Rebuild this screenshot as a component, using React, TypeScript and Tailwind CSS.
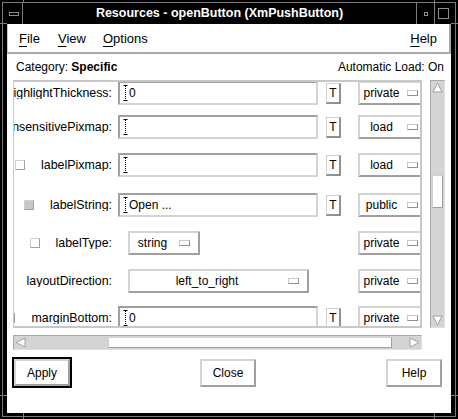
import React from "react";

const raised = "border-2 border-t-[#d4d4d4] border-l-[#d4d4d4] border-r-[#a0a0a0] border-b-[#a0a0a0]";
const sunken = "border-2 border-t-[#a0a0a0] border-l-[#a0a0a0] border-r-[#d4d4d4] border-b-[#d4d4d4]";

type Row = {
  label: string;
  check?: "off" | "on";
  kind: "text" | "option";
  value: string;
  optWidth?: string;
  access: string;
  top: string;
};

const rows: Row[] = [
  { label: "highlightThickness:", kind: "text", value: "0", access: "private", top: "mt-[-1px]" },
  { label: "insensitivePixmap:", kind: "text", value: "", access: "load", top: "mt-[10px]" },
  { label: "labelPixmap:", check: "off", kind: "text", value: "", access: "load", top: "mt-[14px]" },
  { label: "labelString:", check: "on", kind: "text", value: "Open ...", access: "public", top: "mt-[16px]" },
  { label: "labelType:", check: "off", kind: "option", value: "string", optWidth: "w-[72px]", access: "private", top: "mt-[14px]" },
  { label: "layoutDirection:", kind: "option", value: "left_to_right", optWidth: "w-[181px]", access: "private", top: "mt-[14px]" },
  { label: "marginBottom:", check: "off", kind: "text", value: "0", access: "private", top: "mt-[13px]" },
];

function Cursor() {
  return (
    <svg width="5" height="16" viewBox="0 0 5 16" className="shrink-0">
      <path d="M0.5 0.5h4M0.5 15.5h4" stroke="#000" />
      <path d="M2.5 1v14" stroke="#000" strokeDasharray="1 1" />
    </svg>
  );
}

function Indicator() {
  return <span className="block w-[11px] h-[6px] border border-t-[#c8c8c8] border-l-[#c8c8c8] border-r-[#909090] border-b-[#909090] bg-white shrink-0" />;
}

function OptionMenu({ text, width }: { text: string; width: string }) {
  return (
    <div className={`flex items-center h-[24px] bg-white ${raised} ${width} shrink-0`}>
      <span className="flex-1 text-center">{text}</span>
      <span className="mr-[8px] ml-[4px]">
        <Indicator />
      </span>
    </div>
  );
}

function CheckBox({ on }: { on: boolean }) {
  return (
    <span
      className={`block w-[10px] h-[10px] border border-t-[#d0d0d0] border-l-[#d0d0d0] border-r-[#a0a0a0] border-b-[#a0a0a0] shrink-0 ${on ? "bg-[#c8c8c8]" : "bg-white"}`}
    />
  );
}

function ResourceRow({ row }: { row: Row }) {
  return (
    <div className={`flex items-center h-[24px] shrink-0 ${row.top}`}>
      <div className="w-[98px] shrink-0 flex justify-end items-center overflow-hidden whitespace-nowrap text-[12.4px]">
        {row.check && (
          <span className="mr-[16px]">
            <CheckBox on={row.check === "on"} />
          </span>
        )}
        <span>{row.label}</span>
      </div>
      <div className="w-[208px] ml-[6px] shrink-0 flex items-center">
        {row.kind === "text" ? (
          <div className={`w-[200px] h-[24px] bg-white flex items-center pl-[3px] ${sunken}`}>
            <Cursor />
            <span className="ml-[1px]">{row.value}</span>
          </div>
        ) : (
          <div className="pl-[10px]">
            <OptionMenu text={row.value} width={row.optWidth ?? "w-[72px]"} />
          </div>
        )}
      </div>
      <div className="w-[32px] shrink-0">
        {row.kind === "text" && (
          <div className="w-[15px] h-[21px] flex items-center justify-center border border-l-[#d0d0d0] border-t-[#d0d0d0] border-r-[#909090] border-b-[#909090] border-r-2 border-b-2">
            T
          </div>
        )}
      </div>
      <OptionMenu text={row.access} width="w-[70px]" />
    </div>
  );
}

function Arrow({ dir }: { dir: "up" | "down" | "left" | "right" }) {
  const d =
    dir === "up"
      ? "M5.5 1L10 10H1Z"
      : dir === "down"
      ? "M1 1H10L5.5 10Z"
      : dir === "left"
      ? "M1 5.5L10 1V10Z"
      : "M1 1L10 5.5L1 10Z";
  return (
    <svg width="11" height="11" viewBox="0 0 11 11" className="shrink-0">
      <path d={d} fill="#ffffff" stroke="#a0a0a0" strokeWidth="1" />
    </svg>
  );
}

export default function App() {
  return (
    <div className="relative w-[458px] h-[419px] bg-black pt-[3px] px-[7px] pb-[6px] flex flex-col text-[12px] text-black font-['Liberation_Sans',Arial,sans-serif] leading-none overflow-hidden">
      {/* frame line and corner ticks */}
      <div className="absolute inset-[2px] border border-[#7c7c7c] pointer-events-none" />
      <div className="absolute left-[23px] top-0 w-px h-[3px] bg-[#7c7c7c]" />
      <div className="absolute left-[434px] top-0 w-px h-[3px] bg-[#7c7c7c]" />
      <div className="absolute left-[23px] bottom-0 w-px h-[6px] bg-[#7c7c7c]" />
      <div className="absolute left-[434px] bottom-0 w-px h-[6px] bg-[#7c7c7c]" />
      <div className="absolute left-0 top-[23px] w-[7px] h-px bg-[#7c7c7c]" />
      <div className="absolute left-0 top-[395px] w-[7px] h-px bg-[#7c7c7c]" />
      <div className="absolute right-0 top-[23px] w-[7px] h-px bg-[#7c7c7c]" />
      <div className="absolute right-0 top-[395px] w-[7px] h-px bg-[#7c7c7c]" />

      {/* title bar */}
      <div className="relative flex h-[21px] shrink-0 bg-black">
        <div className="w-[17px] flex items-center justify-center border-r border-[#7c7c7c] ml-[-1px]">
          <span className="block w-[10px] h-[4px] border border-[#8c8c8c]" />
        </div>
        <div className="flex-1 flex items-center justify-center text-white font-bold text-[12.5px]">
          Resources - openButton (XmPushButton)
        </div>
        <div className="w-[18px] flex items-center justify-center border-l border-[#7c7c7c]">
          <span className="block w-[4px] h-[4px] border border-[#8c8c8c]" />
        </div>
        <div className="w-[17px] flex items-center justify-center border-l border-[#7c7c7c]">
          <span className="block w-[11px] h-[11px] border border-[#8c8c8c]" />
        </div>
      </div>

      {/* dialog body */}
      <div className="flex-1 bg-white flex flex-col">
        <div className="h-[30px] shrink-0 flex items-center border-l border-l-[#c8c8c8] border-r-2 border-b-2 border-r-[#a8a8a8] border-b-[#a8a8a8] pl-[11px] pr-[12px] text-[13px]">
          <span>
            <span className="underline underline-offset-[3px]">F</span>ile
          </span>
          <span className="ml-[18px]">
            <span className="underline underline-offset-[3px]">V</span>iew
          </span>
          <span className="ml-[17px]">
            <span className="underline underline-offset-[3px]">O</span>ptions
          </span>
          <span className="ml-auto">
            <span className="underline underline-offset-[3px]">H</span>elp
          </span>
        </div>

        <div className="h-[26px] shrink-0 flex items-center pl-[9px] pr-[7px]">
          <span>
            Category: <span className="font-bold">Specific</span>
          </span>
          <span className="ml-auto">Automatic Load: On</span>
        </div>

        <div className="flex ml-[6px] shrink-0">
          <div className="flex flex-col">
            <div className="w-[409px] h-[248px] border-2 border-l border-[#c8c8c8] overflow-hidden flex flex-col">
              {rows.map((r) => (
                <ResourceRow key={r.label} row={r} />
              ))}
            </div>
            <div className="mt-[7px] w-[409px] h-[15px] flex items-center bg-[#d4d4d4] border border-t-[#a8a8a8] border-l-[#a8a8a8] border-r-[#e0e0e0] border-b-[#e0e0e0]">
              <span className="ml-[1px]">
                <Arrow dir="left" />
              </span>
              <div className="ml-[82px] w-[284px] h-[11px] bg-white border border-b-[#a0a0a0] border-r-[#a0a0a0] border-t-[#d0d0d0] border-l-[#d0d0d0]" />
              <span className="ml-auto mr-[1px]">
                <Arrow dir="right" />
              </span>
            </div>
          </div>
          <div className="ml-[8px] w-[15px] h-[248px] flex flex-col items-center bg-[#d4d4d4] border border-t-[#a8a8a8] border-l-[#a8a8a8] border-r-[#e0e0e0] border-b-[#e0e0e0]">
            <span className="mt-[1px]">
              <Arrow dir="up" />
            </span>
            <div className="mt-[82px] w-[11px] h-[33px] bg-white border border-b-[#a0a0a0] border-r-[#a0a0a0] border-t-[#d0d0d0] border-l-[#d0d0d0]" />
            <span className="mt-auto mb-[1px]">
              <Arrow dir="down" />
            </span>
          </div>
        </div>

        <div className="flex items-center mt-[7px] ml-[5px] mr-[9px] shrink-0">
          <div className="border-2 border-black">
            <button className={`w-[56px] h-[27px] bg-white ${raised}`}>Apply</button>
          </div>
          <button className={`ml-[128px] w-[56px] h-[28px] bg-white ${raised}`}>Close</button>
          <button className={`ml-auto w-[56px] h-[28px] bg-white ${raised}`}>Help</button>
        </div>
      </div>
    </div>
  );
}
